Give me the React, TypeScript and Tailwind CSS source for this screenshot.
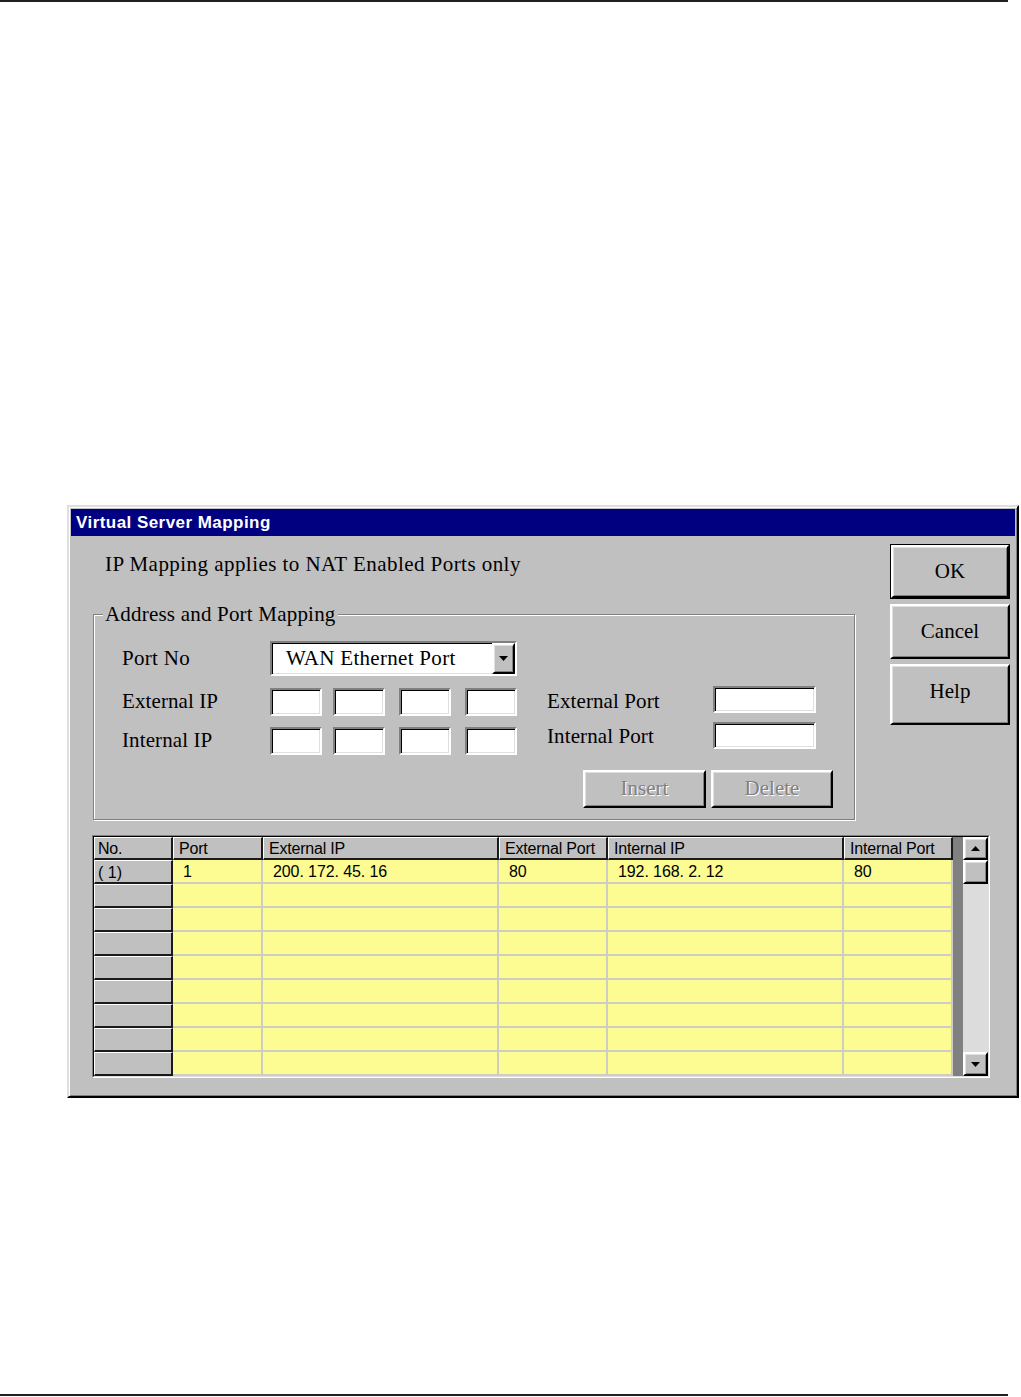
import React from 'react';

const serif = "font-['Liberation_Serif','Times_New_Roman',serif]";
const sans = "font-['Liberation_Sans',Arial,sans-serif]";

// win95-ish bevels
const raised =
  'bg-[#c0c0c0] border-2 border-t-white border-l-white border-r-black border-b-black shadow-[inset_1px_1px_0_#dfdfdf,inset_-1px_-1px_0_#808080]';
const sunken =
  'bg-white border-2 border-t-[#808080] border-l-[#808080] border-r-white border-b-white shadow-[inset_1px_1px_0_#000,inset_-1px_-1px_0_#dfdfdf]';

const COLS = [
  { label: 'No.', w: 'w-[79px]', pad: 'pl-[3px]' },
  { label: 'Port', w: 'w-[90px]', pad: 'pl-[5px]' },
  { label: 'External IP', w: 'w-[236px]', pad: 'pl-[5px]' },
  { label: 'External Port', w: 'w-[109px]', pad: 'pl-[5px]' },
  { label: 'Internal IP', w: 'w-[236px]', pad: 'pl-[5px]' },
  { label: 'Internal Port', w: 'w-[109px]', pad: 'pl-[5px]' },
];

const ROWS: string[][] = [
  ['( 1)', '1', '200. 172. 45. 16', '80', '192. 168. 2. 12', '80'],
  ['', '', '', '', '', ''],
  ['', '', '', '', '', ''],
  ['', '', '', '', '', ''],
  ['', '', '', '', '', ''],
  ['', '', '', '', '', ''],
  ['', '', '', '', '', ''],
  ['', '', '', '', '', ''],
  ['', '', '', '', '', ''],
];

function Arrow({ down = true }: { down?: boolean }) {
  return (
    <svg width="9" height="5" viewBox="0 0 9 5">
      {down ? <polygon points="0,0 9,0 4.5,5" fill="#000" /> : <polygon points="0,5 9,5 4.5,0" fill="#000" />}
    </svg>
  );
}

function IpBoxes() {
  return (
    <div className="flex">
      <div className={`${sunken} w-[52px] h-[28px]`} />
      <div className={`${sunken} w-[52px] h-[28px] ml-[11px]`} />
      <div className={`${sunken} w-[52px] h-[28px] ml-[14px]`} />
      <div className={`${sunken} w-[52px] h-[28px] ml-[14px]`} />
    </div>
  );
}

function GroupBox() {
  return (
    <div className="relative mt-[38px] h-[206px] border border-[#808080] shadow-[inset_1px_1px_0_#fff,1px_1px_0_#fff] pt-[26px] pl-[28px]">
      <span className="absolute left-[9px] top-[-13px] px-[2px] bg-[#c0c0c0] text-[21px] leading-[24px] tracking-[0.2px]">
        Address and Port Mapping
      </span>

      <div className="flex items-center">
        <span className="w-[148px] text-[21px] tracking-[0.3px]">Port No</span>
        <div className={`${sunken} w-[247px] h-[35px] flex`}>
          <span className="flex-1 pl-[14px] text-[21px] leading-[31px] tracking-[0.3px]">WAN Ethernet Port</span>
          <div className={`${raised} w-[23px] flex items-center justify-center`}>
            <Arrow />
          </div>
        </div>
      </div>

      <div className="flex mt-[10px]">
        <div className="flex flex-col">
          <div className="flex items-center mt-[2px] h-[28px]">
            <span className="w-[148px] text-[21px] tracking-[0.1px]">External IP</span>
            <IpBoxes />
          </div>
          <div className="flex items-center mt-[11px] h-[28px]">
            <span className="w-[148px] text-[21px] tracking-[0.1px]">Internal IP</span>
            <IpBoxes />
          </div>
        </div>
        <div className="flex flex-col ml-[30px]">
          <div className="flex items-center h-[27px]">
            <span className="w-[166px] text-[21px] tracking-[0.1px] pt-[4px]">External Port</span>
            <div className={`${sunken} w-[103px] h-[27px]`} />
          </div>
          <div className="flex items-center mt-[9px] h-[27px]">
            <span className="w-[166px] text-[21px] tracking-[0.1px] pt-[3px]">Internal Port</span>
            <div className={`${sunken} w-[103px] h-[27px]`} />
          </div>
        </div>
      </div>

      <div className="flex justify-end gap-[5px] mt-[15px] pr-[21px]">
        <button className={`${raised} w-[123px] h-[38px] text-[21px] text-[#808080] [text-shadow:1px_1px_0_#fff]`}>
          Insert
        </button>
        <button className={`${raised} w-[122px] h-[38px] text-[21px] text-[#808080] [text-shadow:1px_1px_0_#fff]`}>
          Delete
        </button>
      </div>
    </div>
  );
}

function Grid() {
  return (
    <div className={`${sans} mt-[15px] ml-[21px] w-[898px] h-[243px] border border-t-[#808080] border-l-[#808080] border-r-white border-b-white`}>
      <div className="h-full flex border border-t-black border-l-black border-r-[#dfdfdf] border-b-[#dfdfdf]">
        <div className="w-[859px] flex flex-col">
          <div className="flex h-[23px]">
            {COLS.map((c) => (
              <div
                key={c.label}
                className={`${c.w} ${c.pad} h-full flex items-center pt-[1px] bg-[#c0c0c0] border-t border-l border-t-white border-l-white border-r-2 border-b-2 border-r-[#1a1a1a] border-b-[#1a1a1a] text-[16px] tracking-[-0.2px] whitespace-nowrap overflow-hidden`}
              >
                {c.label}
              </div>
            ))}
          </div>
          {ROWS.map((row, i) => (
            <div key={i} className="flex h-[24px]">
              <div className="w-[79px] h-full pl-[3px] pt-[2px] flex items-center bg-[#c0c0c0] border-t border-l border-t-white border-l-white border-r-2 border-b-2 border-r-[#1a1a1a] border-b-[#1a1a1a] text-[16px]">
                {row[0]}
              </div>
              {row.slice(1).map((v, j) => (
                <div
                  key={j}
                  className={`${COLS[j + 1].w} h-full pl-[10px] pt-[2px] flex items-center bg-[#fcfc92] border-r-2 border-b-2 border-[#cdcdc4] text-[16px] tracking-[-0.1px] whitespace-nowrap`}
                >
                  {v}
                </div>
              ))}
            </div>
          ))}
        </div>
        <div className="w-[10px] bg-[#808080]" />
        <div className="w-[25px] flex flex-col">
          <div className={`${raised} h-[23px] flex items-center justify-center`}>
            <Arrow down={false} />
          </div>
          <div className={`${raised} h-[24px]`} />
          <div className="flex-1 bg-[#dcdcdc]" />
          <div className={`${raised} h-[24px] flex items-center justify-center`}>
            <Arrow />
          </div>
        </div>
      </div>
    </div>
  );
}

export default function App() {
  return (
    <div className={`${serif} w-[1021px] h-[1397px] bg-white flex flex-col text-black`}>
      <div className="h-[2px] w-[1008px] bg-[#231f20]" />

      <div className="mt-[503px] ml-[67px] w-[952px] h-[593px] bg-[#c0c0c0] border-2 border-t-[#dfdfdf] border-l-[#dfdfdf] border-r-black border-b-black shadow-[inset_1px_1px_0_#fff,inset_-1px_-1px_0_#808080] p-[2px] flex flex-col">
        <div className={`${sans} h-[27px] bg-[#000080] flex items-center pl-[5px] text-white font-bold text-[17px] tracking-[0.45px]`}>
          Virtual Server Mapping
        </div>

        <div className="flex">
          <div className="ml-[22px] w-[762px] flex flex-col">
            <p className="mt-[16px] pl-[12px] text-[21px] leading-[24px] tracking-[0.45px]">
              IP Mapping applies to NAT Enabled Ports only
            </p>
            <GroupBox />
          </div>

          <div className="ml-[35px] mt-[8px] w-[120px] flex flex-col gap-[5px]">
            <div className="h-[55px] border border-black">
              <button className={`${raised} w-full h-full text-[21px]`}>OK</button>
            </div>
            <button className={`${raised} h-[55px] text-[21px]`}>Cancel</button>
            <button className={`${raised} h-[61px] text-[21px] pb-[5px]`}>Help</button>
          </div>
        </div>

        <Grid />
      </div>

      <div className="mt-[296px] h-[2px] w-[1008px] bg-[#231f20]" />
    </div>
  );
}
